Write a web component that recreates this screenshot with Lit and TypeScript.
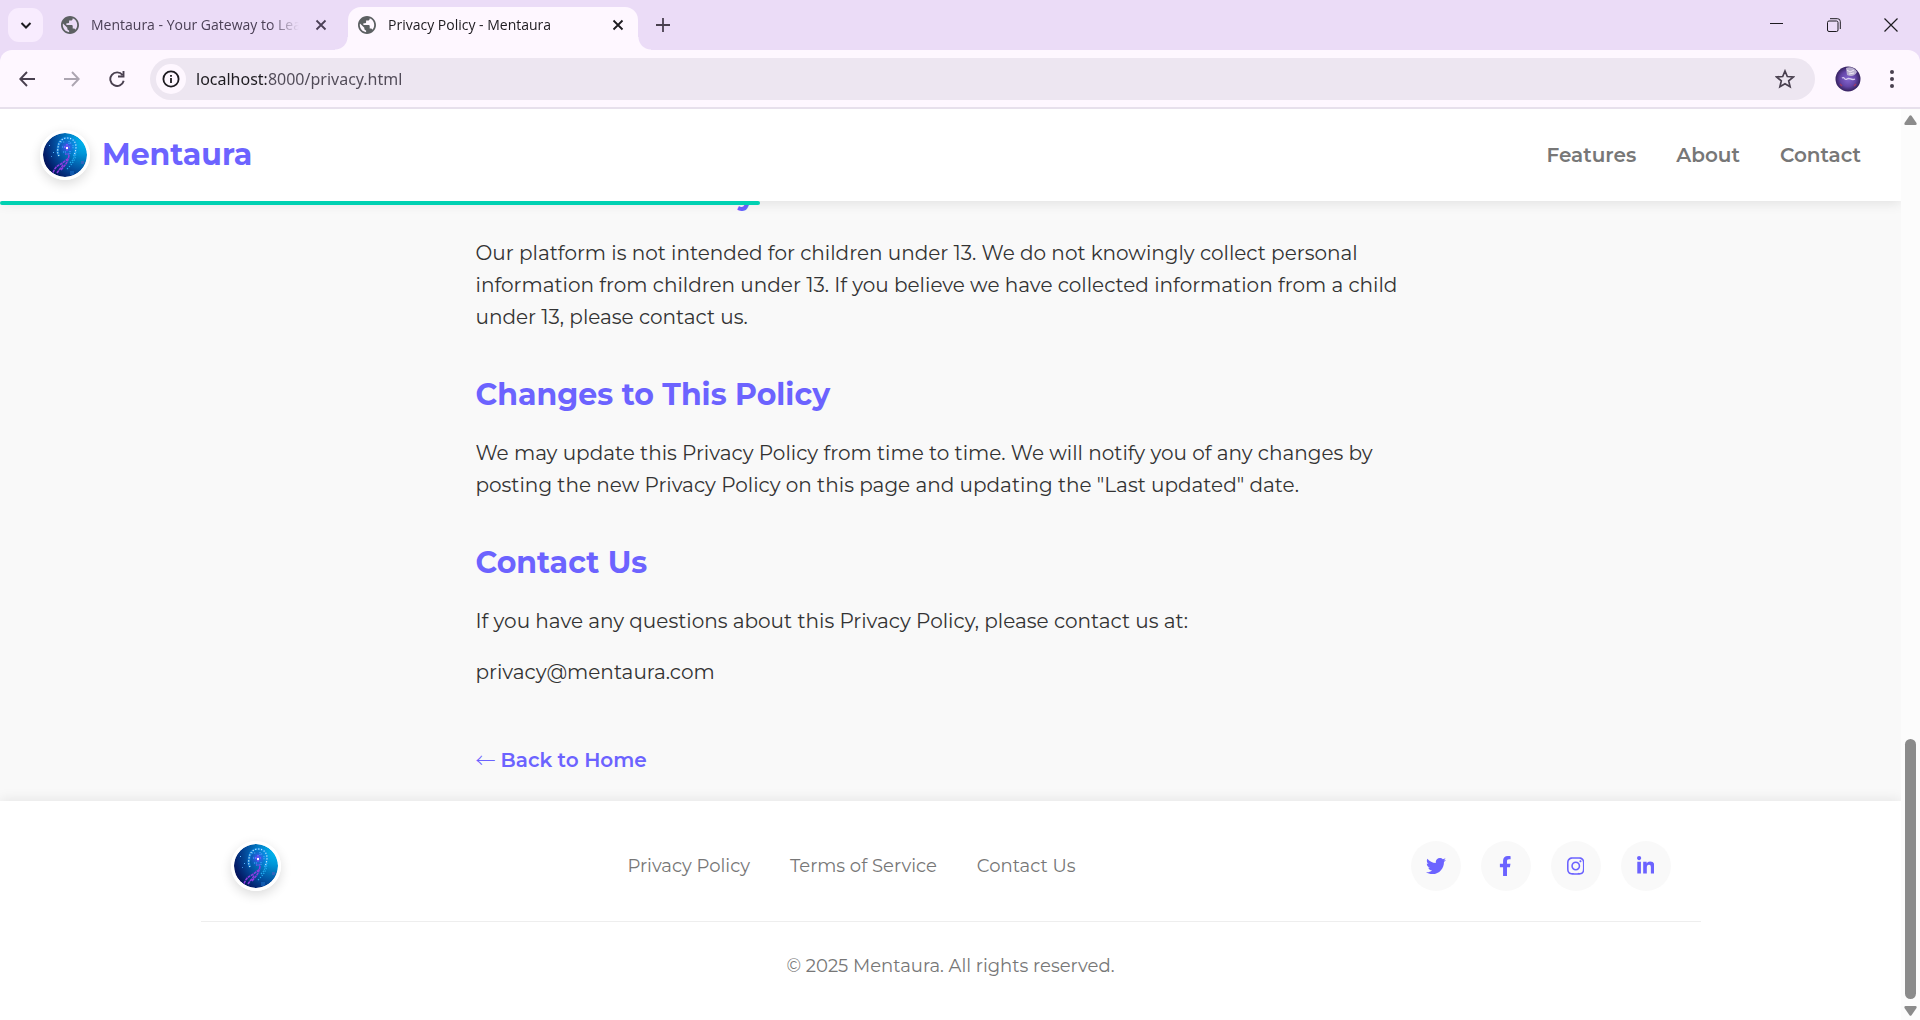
import { LitElement, html, css, svg } from "lit";
import { customElement, property } from "lit/decorators.js";

@customElement("aura-logo")
export class AuraLogo extends LitElement {
  static styles = css`
    :host { display: block; flex: none; width: 50px; height: 50px; box-sizing: border-box; border: 3px solid #fff; border-radius: 50%; box-shadow: 0 4px 12px rgba(0, 0, 0, 0.14); overflow: hidden; }
    svg { display: block; width: 44px; height: 44px; }
  `;
  render() {
    return html`<svg viewBox="0 0 44 44" aria-hidden="true">
      <defs>
        <radialGradient id="bg" cx="0.95" cy="0.2" r="1.1">
          <stop offset="0" stop-color="#00b8f0" />
          <stop offset="0.25" stop-color="#0096d8" />
          <stop offset="0.6" stop-color="#0350a0" />
          <stop offset="0.85" stop-color="#03206c" />
          <stop offset="1" stop-color="#05094c" />
        </radialGradient>
        <radialGradient id="glow"><stop offset="0" stop-color="#6a4dff" stop-opacity="0.8" /><stop offset="1" stop-color="#1a48e0" stop-opacity="0" /></radialGradient>
        <clipPath id="disc"><circle cx="22" cy="22" r="22" /></clipPath>
      </defs>
      <g clip-path="url(#disc)">
        <rect width="44" height="44" fill="url(#bg)" />
        <circle cx="24" cy="14" r="9" fill="url(#glow)" />
        <path d="M16 23c-1-2-2-4-1-7 0-7 4-11 9-11 6 0 9 4 9 9 0 3-1 6-2 9" fill="none" stroke="#1688f0" stroke-width="2.6" opacity="0.6" />
        <path d="M16 23c-1-2-2-4-1-7 0-7 4-11 9-11 6 0 9 4 9 9 0 3-1 6-2 9" fill="none" stroke="#c4f2ff" stroke-width="1.2" stroke-dasharray="1.2 1.7" />
        <path d="M18 9h4m4-1v3m4 1v4m-11-2h3m5 4v3m-7-2h3m4-9h2" stroke="#44b4ff" stroke-width="1" stroke-dasharray="1.2 0.9" />
        <path d="M21 14h6m-3-3v7m-2 3h5" stroke="#a34bff" stroke-width="1.2" stroke-dasharray="1.6 0.8" />
        <rect x="23" y="14" width="2" height="2" fill="#fff" />
        <path d="M9 43c2-7 4-10 9-12l8-6M14 40c3-5 5-5 6-9M18 37c4-5 7-7 8-15" fill="none" stroke="#8c3ce0" stroke-width="1.5" stroke-dasharray="3 0.6" />
        <path d="M24 36c5-5 9-9 9-18M27 30c3-3 4-5 4-9" fill="none" stroke="#28b5f5" stroke-width="1.1" stroke-dasharray="1.3 1.4" />
        <rect x="6" y="12" width="1" height="1" fill="#55b6ff" /><rect x="10" y="19" width="1" height="1" fill="#55b6ff" /><rect x="8" y="23" width="1" height="1" fill="#3a8fe0" />
        <rect x="38" y="28" width="3" height="3" fill="#5461bd" opacity="0.6" /><rect x="27" y="38" width="4" height="4" fill="#196dc4" opacity="0.6" />
      </g>
    </svg>`;
  }
}

const globe = svg`<path fill="#5c6062" d="M12 2C6.480 2 2 6.480 2 12s4.480 10 10 10 10-4.480 10-10S17.520 2 12 2zm-1 17.930c-3.950-.49-7-3.850-7-7.930 0-.62.080-1.210.21-1.790L9 15v1c0 1.100.9 2 2 2v1.930zm6.900-2.540c-.26-.81-1-1.390-1.900-1.390h-1v-3c0-.55-.45-1-1-1H8v-2h2c.55 0 1-.45 1-1V7h2c1.100 0 2-.9 2-2v-.41c2.930 1.190 5 4.060 5 7.410 0 2.080-.8 3.970-2.100 5.390z"/>`;

@customElement("browser-tab")
export class BrowserTab extends LitElement {
  @property() label = "";
  @property({ type: Boolean, reflect: true }) active = false;
  static styles = css`
    :host { position: relative; display: flex; align-items: center; gap: 12px; box-sizing: border-box; width: 290px; height: 43px; padding: 0 10px 7px; color: #4b4056; }
    :host([active]) { background: #fef7ff; border-radius: 13px 13px 0 0; color: #1d1b20; }
    :host([active])::before, :host([active])::after { content: ""; position: absolute; bottom: 0; width: 13px; height: 13px; }
    :host([active])::before { left: -13px; background: radial-gradient(circle at 0 0, transparent 12px, #fef7ff 13px); }
    :host([active])::after { right: -13px; background: radial-gradient(circle at 100% 0, transparent 12px, #fef7ff 13px); }
    .globe { flex: none; width: 18px; height: 18px; }
    .label { flex: 1; overflow: hidden; white-space: nowrap; font: 14px/20px "Open Sans", sans-serif; mask-image: linear-gradient(90deg, #000 86%, transparent); }
    .close { display: flex; padding: 4px; border: 0; background: none; color: inherit; }
    .close svg { width: 12px; height: 12px; }
  `;
  render() {
    return html`<svg class="globe" viewBox="2 2 20 20">${globe}</svg>
      <span class="label">${this.label}</span>
      <button class="close" aria-label="Close tab"><svg viewBox="0 0 12 12"><path d="M1.500 1.500l9 9m0-9l-9 9" stroke="currentColor" stroke-width="1.800" /></svg></button>`;
  }
}

@customElement("browser-chrome")
export class BrowserChrome extends LitElement {
  static styles = css`
    :host { display: block; flex: none; background: #ebdcf7; color: #49404f; }
    button { display: flex; align-items: center; justify-content: center; padding: 0; border: 0; background: none; color: inherit; }
    svg { display: block; fill: none; stroke: currentColor; }
    .strip { display: flex; align-items: flex-end; height: 50px; padding: 0 1px 0 8px; box-sizing: border-box; }
    .tabs { display: flex; gap: 7px; }
    .search { width: 35px; height: 34px; margin: 0 8px 8px 0; border-radius: 11px; background: #f8ecfe; color: #1d1b20; }
    .plus { width: 34px; height: 34px; margin: 0 0 8px 8px; }
    .windows { display: flex; align-self: stretch; margin-left: auto; color: #1d1b20; }
    .windows button { width: 57px; }
    .toolbar { display: flex; align-items: center; box-sizing: border-box; height: 59px; padding: 0 10px 0 9px; border-bottom: 2px solid #e7e0ec; border-radius: 12px 12px 0 0; background: #fef7ff; }
    .nav { width: 36px; height: 36px; margin-right: 9px; }
    .dim { color: #aca5b1; }
    .address { display: flex; flex: 1; align-items: center; box-sizing: border-box; height: 42px; margin: 0 20px 0 6px; padding: 0 20px 0 6px; border-radius: 21px; background: #ede6f1; }
    .info { width: 30px; height: 30px; border-radius: 50%; background: #fef7ff; color: #1d1b20; }
    .field { flex: 1; display: flex; margin-left: 10px; }
    .url { width: 100%; border: 0; padding: 0; outline: 0; background: linear-gradient(90deg, #1d1b20 70px, #504a57 70px); background-clip: text; -webkit-background-clip: text; color: transparent; font: 16px/24px "Noto Sans", sans-serif; }
    .avatar { width: 26px; height: 26px; margin-right: 13px; }
    .more { width: 36px; height: 36px; }
  `;
  render() {
    return html`
      <div class="strip">
        <button class="search" aria-label="Search tabs"><svg width="12" height="12" viewBox="0 0 12 12"><path d="M1.500 4L6 8.500 10.500 4" stroke-width="2" /></svg></button>
        <div class="tabs">
          <browser-tab label="Mentaura - Your Gateway to Learning"></browser-tab>
          <browser-tab active label="Privacy Policy - Mentaura"></browser-tab>
        </div>
        <button class="plus" aria-label="New tab"><svg width="14" height="14" viewBox="0 0 14 14"><path d="M7 0v14M0 7h14" stroke-width="1.800" /></svg></button>
        <div class="windows">
          <button aria-label="Minimize"><svg width="14" height="14" viewBox="0 0 14 14"><path d="M0 5.500h13" /></svg></button>
          <button aria-label="Restore"><svg width="14" height="14" viewBox="0 0 14 14"><rect x="0.500" y="3" width="10.500" height="10.500" rx="1.500" /><path d="M3 .7h7.500a2.800 2.800 0 0 1 2.800 2.800v7.500" /></svg></button>
          <button aria-label="Close"><svg width="14" height="14" viewBox="0 0 14 14"><path d="M.5.500l13 13m0-13l-13 13" stroke-width="1.200" /></svg></button>
        </div>
      </div>
      <div class="toolbar">
        <button class="nav" aria-label="Back"><svg width="16" height="16" viewBox="0 0 16 16"><path d="M16 8H1.500M8 1L1.300 8 8 15" stroke-width="1.900" /></svg></button>
        <button class="nav dim" aria-label="Forward"><svg width="16" height="16" viewBox="0 0 16 16"><path d="M0 8h14.500M8 1l6.700 7L8 15" stroke-width="1.900" /></svg></button>
        <button class="nav" aria-label="Reload"><svg width="16" height="16" viewBox="0 0 16 16"><path d="M13.500 4A6.800 6.800 0 1 0 14.700 9.800M14.500 0v5.500H9" stroke-width="1.900" /></svg></button>
        <div class="address">
          <button class="info" aria-label="Site information"><svg width="18" height="18" viewBox="0 0 18 18"><circle cx="9" cy="9" r="7.600" stroke-width="1.800" /><path d="M9 8v5M9 5v1.800" stroke-width="1.800" /></svg></button>
          <label class="field"><input class="url" aria-label="Address" value="localhost:8000/privacy.html" /></label>
          <button aria-label="Bookmark"><svg width="20" height="20" viewBox="0 0 20 20"><path d="M10 2l2.300 5.500 6 .5-4.600 3.900 1.400 5.900L10 14.700l-5.100 3.100 1.400-5.900L1.700 8l6-.5z" stroke-width="1.700" /></svg></button>
        </div>
        <button class="avatar" aria-label="Profile"><svg width="26" height="26" viewBox="0 0 26 26" stroke="none">
          <defs><radialGradient id="av"><stop offset="0" stop-color="#8467d0" /><stop offset="0.6" stop-color="#6546a8" /><stop offset="1" stop-color="#35215f" /></radialGradient></defs>
          <circle cx="13" cy="13" r="12.500" fill="url(#av)" stroke="none" />
          <path d="M11 2c4-2 9 0 11 4-2 4-6 5-10 3z" fill="#b9afd0" stroke="none" /><path d="M12 4l3 2 4-2m-5 4l5-1" stroke="#eee9f5" />
          <path d="M7 12c3-2 2 3 5 1s4 2 8 0" stroke="#d9ceef" stroke-width="1.300" /><path d="M5 18l2 2m12 0l2-2" stroke="#a03a68" stroke-width="1.500" />
        </svg></button>
        <button class="more" aria-label="Menu"><svg width="6" height="20" viewBox="0 0 6 20"><g fill="currentColor" stroke="none"><circle cx="3" cy="3" r="2" /><circle cx="3" cy="10" r="2" /><circle cx="3" cy="17" r="2" /></g></svg></button>
      </div>`;
  }
}

const socials = [
  { name: "Twitter", box: "0 0 512 512", d: "M459.370 151.716c.325 4.548.325 9.097.325 13.645 0 138.720-105.583 298.558-298.558 298.558-59.452 0-114.680-17.219-161.137-47.106 8.447.974 16.568 1.299 25.340 1.299 49.055 0 94.213-16.568 130.274-44.832-46.132-.975-84.792-31.188-98.112-72.772 6.498.974 12.995 1.624 19.818 1.624 9.421 0 18.843-1.300 27.614-3.573-48.081-9.747-84.143-51.980-84.143-102.985v-1.299c13.969 7.797 30.214 12.670 47.431 13.319-28.264-18.843-46.781-51.005-46.781-87.391 0-19.492 5.197-37.360 14.294-52.954 51.655 63.675 129.300 105.258 216.365 109.807-1.624-7.797-2.599-15.918-2.599-24.040 0-57.828 46.782-104.934 104.934-104.934 30.213 0 57.502 12.670 76.670 33.137 23.715-4.548 46.456-13.320 66.599-25.340-7.798 24.366-24.366 44.833-46.132 57.827 21.117-2.273 41.584-8.122 60.426-16.243-14.292 20.791-32.161 39.308-52.628 54.253z" },
  { name: "Facebook", box: "0 0 320 512", d: "M279.140 288l14.220-92.660h-88.910v-60.130c0-25.350 12.420-50.060 52.240-50.060h40.420V6.260S260.430 0 225.360 0c-73.220 0-121.080 44.380-121.080 124.720v70.620H22.890V288h81.390v224h100.170V288z" },
  { name: "Instagram", box: "0 0 448 512", d: "M224.100 141c-63.600 0-114.900 51.300-114.900 114.900s51.300 114.900 114.900 114.900S339 319.500 339 255.900 287.700 141 224.100 141zm0 189.600c-41.100 0-74.700-33.500-74.700-74.700s33.500-74.700 74.700-74.700 74.700 33.500 74.700 74.700-33.600 74.700-74.700 74.700zm146.400-194.300c0 14.900-12 26.800-26.800 26.800-14.900 0-26.800-12-26.800-26.800s12-26.800 26.800-26.800 26.800 12 26.800 26.800zm76.100 27.200c-1.700-35.900-9.900-67.700-36.200-93.900-26.200-26.200-58-34.400-93.900-36.200-37-2.100-147.900-2.100-184.900 0-35.800 1.700-67.600 9.900-93.900 36.100s-34.400 58-36.200 93.900c-2.100 37-2.100 147.900 0 184.900 1.700 35.900 9.900 67.700 36.200 93.900s58 34.400 93.900 36.200c37 2.100 147.900 2.100 184.900 0 35.900-1.700 67.700-9.900 93.900-36.200 26.200-26.200 34.400-58 36.200-93.900 2.100-37 2.100-147.800 0-184.800zM398.800 388c-7.800 19.600-22.900 34.700-42.600 42.600-29.500 11.700-99.500 9-132.100 9s-102.700 2.600-132.100-9c-19.600-7.800-34.700-22.900-42.600-42.600-11.700-29.500-9-99.500-9-132.100s-2.600-102.700 9-132.100c7.800-19.600 22.900-34.700 42.600-42.600 29.500-11.700 99.500-9 132.100-9s102.700-2.600 132.100 9c19.600 7.800 34.700 22.900 42.600 42.600 11.700 29.500 9 99.500 9 132.100s2.700 102.700-9 132.100z" },
  { name: "LinkedIn", box: "0 0 448 512", d: "M100.280 448H7.400V148.900h92.880zM53.790 108.100C24.090 108.100 0 83.500 0 53.800a53.790 53.790 0 0 1 107.580 0c0 29.700-24.100 54.300-53.790 54.300zM447.900 448h-92.680V302.400c0-34.700-.7-79.200-48.290-79.200-48.290 0-55.690 37.700-55.690 76.700V448h-92.780V148.900h89.080v40.800h1.300c12.400-23.500 42.690-48.300 87.880-48.300 94 0 111.280 61.900 111.280 142.300V448z" },
];

@customElement("app-root")
export class AppRoot extends LitElement {
  static styles = css`
    :host { display: flex; flex-direction: column; height: 100vh; overflow: hidden; font: 20px/32px Montserrat, Inter, sans-serif; color: #333; }
    a { color: inherit; text-decoration: none; }
    .window { display: flex; flex: 1; min-height: 0; }
    .page { display: flex; flex: 1; flex-direction: column; min-width: 0; overflow: hidden; background: #f9f9f9; }
    header { position: relative; z-index: 1; display: flex; flex: none; align-items: center; justify-content: space-between; box-sizing: border-box; height: 92px; padding: 0 40px; background: #fff; box-shadow: 0 2px 12px rgba(0, 0, 0, 0.1); }
    .progress { position: absolute; top: 100%; left: 0; width: 40%; height: 4px; border-radius: 2px; background: #00d1b2; }
    .brand { display: flex; align-items: center; gap: 12px; color: #6c63ff; font-size: 30px; line-height: 48px; font-weight: 700; }
    nav { display: flex; gap: 40px; }
    header nav { color: #777; font-weight: 600; }
    main { box-sizing: border-box; width: 100%; max-width: 1000px; margin: -30px auto 0; padding: 0 25px 25px; }
    h2 { margin: 38px 0 18px; color: #6c63ff; font-size: 30px; line-height: 48px; font-weight: 700; }
    h2.first { margin-top: 0; }
    p { margin: 0 0 19px; }
    .back { display: flex; width: fit-content; gap: 5px; margin-top: 56px; color: #6c63ff; font-weight: 600; }
    .arrow { font-family: "Noto Sans CJK JP", sans-serif; font-weight: 300; }
    footer { flex: 1; padding: 40px 20px 0; background: #fff; box-shadow: 0 -2px 12px rgba(0, 0, 0, 0.08); color: #777; font-size: 18px; }
    .row { display: flex; align-items: center; justify-content: space-between; max-width: 1440px; margin: 0 auto; padding: 0 30px 30px; border-bottom: 1px solid #eee; }
    .row aura-logo { margin-right: 12px; }
    .socials { display: flex; gap: 20px; }
    .social { display: flex; align-items: center; justify-content: center; width: 50px; height: 50px; border-radius: 50%; background: #f9f9f9; }
    .social svg { height: 20px; fill: #6c63ff; }
    .copy { margin: 28px 0 0; text-align: center; }
    .scroll { display: flex; flex: none; flex-direction: column; align-items: center; justify-content: space-between; box-sizing: border-box; width: 19px; padding: 6px 0 4px; background: #fcfcfc; }
    .scroll svg { display: block; fill: #8b8b8b; }
    .track { display: flex; flex: 1; flex-direction: column; justify-content: flex-end; padding: 8px 0 7px; }
    .thumb { width: 11px; height: 30%; border-radius: 6px; background: #8b8b8b; }
  `;
  render() {
    return html`
      <browser-chrome></browser-chrome>
      <div class="window">
        <div class="page">
          <header>
            <a class="brand" href="#"><aura-logo></aura-logo>Mentaura</a>
            <nav><a href="#features">Features</a><a href="#about">About</a><a href="#contact">Contact</a></nav>
            <div class="progress"></div>
          </header>
          <main>
            <h2 class="first">Children's Privacy</h2>
            <p>Our platform is not intended for children under 13. We do not knowingly collect personal information from children under 13. If you believe we have collected information from a child under 13, please contact us.</p>
            <h2>Changes to This Policy</h2>
            <p>We may update this Privacy Policy from time to time. We will notify you of any changes by posting the new Privacy Policy on this page and updating the "Last updated" date.</p>
            <h2>Contact Us</h2>
            <p>If you have any questions about this Privacy Policy, please contact us at:</p>
            <p>privacy@mentaura.com</p>
            <a class="back" href="#"><span class="arrow">←</span><span>Back to Home</span></a>
          </main>
          <footer>
            <div class="row">
              <aura-logo></aura-logo>
              <nav><a href="#privacy">Privacy Policy</a><a href="#terms">Terms of Service</a><a href="#contact">Contact Us</a></nav>
              <div class="socials">${socials.map((s) => html`<a class="social" href="#" aria-label=${s.name}><svg viewBox=${s.box}><path d=${s.d} /></svg></a>`)}</div>
            </div>
            <p class="copy">© 2025 Mentaura. All rights reserved.</p>
          </footer>
        </div>
        <div class="scroll">
          <svg width="13" height="10" viewBox="0 0 13 10"><path d="M5.500.7q1-1 2 0l5 7.300q.5 2-1 2h-10q-1.500 0-1-2z" /></svg>
          <div class="track"><div class="thumb"></div></div>
          <svg width="13" height="10" viewBox="0 0 13 10"><path d="M5.500 9.300q1 1 2 0l5-7.300q.5-2-1-2h-10q-1.500 0-1 2z" /></svg>
        </div>
      </div>`;
  }
}
